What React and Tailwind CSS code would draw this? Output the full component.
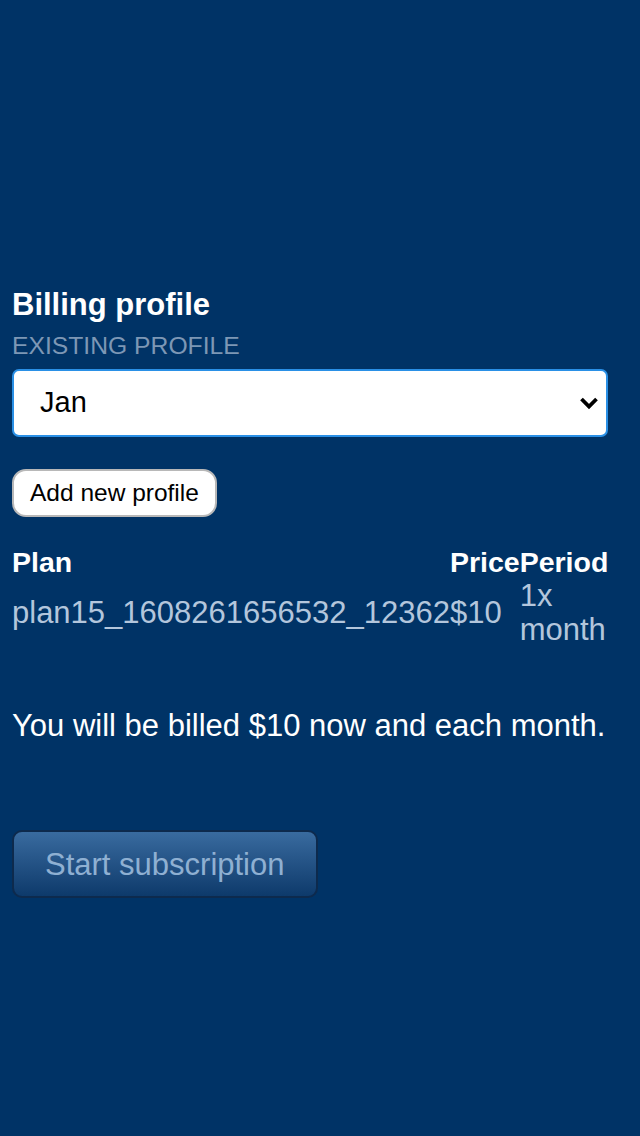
export default function App() {
  return (
    <div
      className="min-h-[1136px] w-full bg-[#003366] pl-3 pr-[32px] pt-[287px]"
      style={{ fontFamily: '"Liberation Sans", Arial, sans-serif' }}
    >
      <h2 className="text-[31px] font-bold leading-[36px] text-white">Billing profile</h2>
      <div className="mt-[9px] text-[24.7px] leading-[28px] text-[#7d97b5]">EXISTING PROFILE</div>
      <div className="relative mt-[9px] h-[68px] w-full rounded-[7px] border-2 border-[#2a90e6] bg-white">
        <div className="flex h-full items-center pl-[26px] text-[29px] text-black">Jan</div>
        <svg
          className="absolute right-[7px] top-1/2 -translate-y-1/2"
          width="20"
          height="13"
          viewBox="0 0 20 13"
        >
          <path d="M2.5 2.5 L10 10 L17.5 2.5" fill="none" stroke="#000" strokeWidth="3.8" />
        </svg>
      </div>
      <button className="mt-[32px] h-[48px] rounded-[14px] border-2 border-[#b8b8b8] bg-white px-[16px] text-[24.5px] leading-none text-black">
        Add new profile
      </button>
      <table className="mt-[28px] w-full border-collapse">
        <thead>
          <tr className="text-[28.5px] leading-[34px] text-white">
            <th className="p-0 text-left font-bold">Plan</th>
            <th className="p-0 text-left font-bold">Price</th>
            <th className="p-0 text-left font-bold">Period</th>
          </tr>
        </thead>
        <tbody>
          <tr className="text-[31px] leading-[34px] text-[#b3c6dc]">
            <td className="p-0 align-middle">plan15_1608261656532_12362</td>
            <td className="p-0 align-middle">$10</td>
            <td className="p-0 align-middle">1x month</td>
          </tr>
        </tbody>
      </table>
      <p className="mt-[61px] text-[31px] leading-[36px] text-white">
        You will be billed $10 now and each month.
      </p>
      <button className="mt-[86px] h-[68px] rounded-[10px] border-2 border-[#0d2a4d] bg-gradient-to-b from-[#396b9f] to-[#0d3a6b] px-[31px] text-[31px] leading-none text-[#8fb0d2]">
        Start subscription
      </button>
    </div>
  );
}
